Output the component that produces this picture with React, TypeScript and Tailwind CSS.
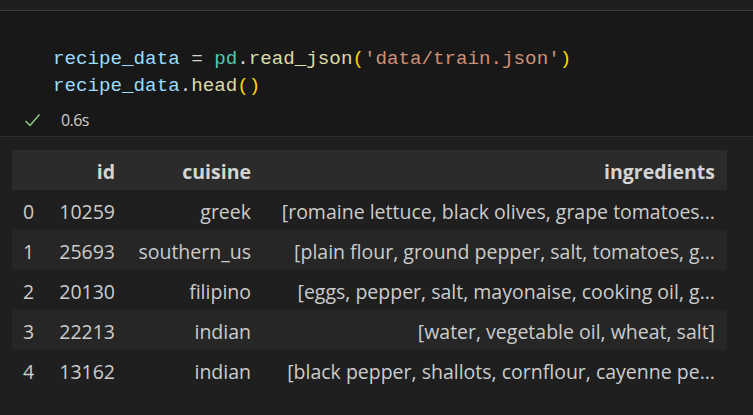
import React from "react";

const rows = [
  ["0", "10259", "greek", "[romaine lettuce, black olives, grape tomatoes..."],
  ["1", "25693", "southern_us", "[plain flour, ground pepper, salt, tomatoes, g..."],
  ["2", "20130", "filipino", "[eggs, pepper, salt, mayonaise, cooking oil, g..."],
  ["3", "22213", "indian", "[water, vegetable oil, wheat, salt]"],
  ["4", "13162", "indian", "[black pepper, shallots, cornflour, cayenne pe..."],
];

export default function App() {
  return (
    <div className="w-[753px] h-[415px] bg-[#1f1f1f] overflow-hidden flex flex-col">
      <div className="h-[11px] bg-[#1f1f1f] border-b border-[#3b3b3b]" />
      <div className="h-[126px] bg-[#181818] border-b border-[#2f2f2f] flex flex-col">
        <div
          className="pl-[53px] pt-[35px] text-[19.2px] leading-[27px] text-[#9cdcfe]"
          style={{ fontFamily: '"Liberation Mono", monospace' }}
        >
          <div className="whitespace-pre">
            <span className="text-[#9cdcfe]">recipe_data</span>
            <span className="text-[#d4d4d4]"> = </span>
            <span className="text-[#4ec9b0]">pd</span>
            <span className="text-[#d4d4d4]">.</span>
            <span className="text-[#dcdcaa]">read_json</span>
            <span className="text-[#ffd700]">(</span>
            <span className="text-[#ce9178]">'data/train.json'</span>
            <span className="text-[#ffd700]">)</span>
          </div>
          <div className="whitespace-pre">
            <span className="text-[#9cdcfe]">recipe_data</span>
            <span className="text-[#d4d4d4]">.</span>
            <span className="text-[#dcdcaa]">head</span>
            <span className="text-[#ffd700]">()</span>
          </div>
        </div>
        <div
          className="flex items-center pl-[24px] mt-[9px] h-[22px]"
          style={{ fontFamily: '"Open Sans", sans-serif' }}
        >
          <svg width="17" height="15" viewBox="0 0 17 15" className="mt-[1px]">
            <path d="M1.5 8 L6 12.5 L15.5 1.5" stroke="#89d185" strokeWidth="1.4" fill="none" />
          </svg>
          <span className="ml-[20px] text-[16px] text-[#cccccc] tracking-[-0.6px]">0.6s</span>
        </div>
      </div>
      <div
        className="pt-[13px] pl-[12px] text-[19.5px] text-[#cccccc]"
        style={{ fontFamily: '"Open Sans", sans-serif' }}
      >
        <div className="w-[715px] flex flex-col">
          <div className="flex h-[40px] items-center pt-[3px] bg-[#2b2b2b] font-bold text-[#d4d4d4]">
            <div className="w-[40px]" />
            <div className="w-[63px] text-right">id</div>
            <div className="w-[136px] text-right">cuisine</div>
            <div className="w-[464px] text-right">ingredients</div>
          </div>
          {rows.map((r, i) => (
            <div
              key={i}
              className={`flex h-[40px] items-center pt-[3px] whitespace-nowrap ${i % 2 === 1 ? "bg-[#262626]" : ""}`}
            >
              <div className="w-[40px] pl-[11px]">{r[0]}</div>
              <div className="w-[63px] text-right">{r[1]}</div>
              <div className="w-[136px] text-right">{r[2]}</div>
              <div className="w-[464px] text-right">{r[3]}</div>
            </div>
          ))}
        </div>
      </div>
    </div>
  );
}
